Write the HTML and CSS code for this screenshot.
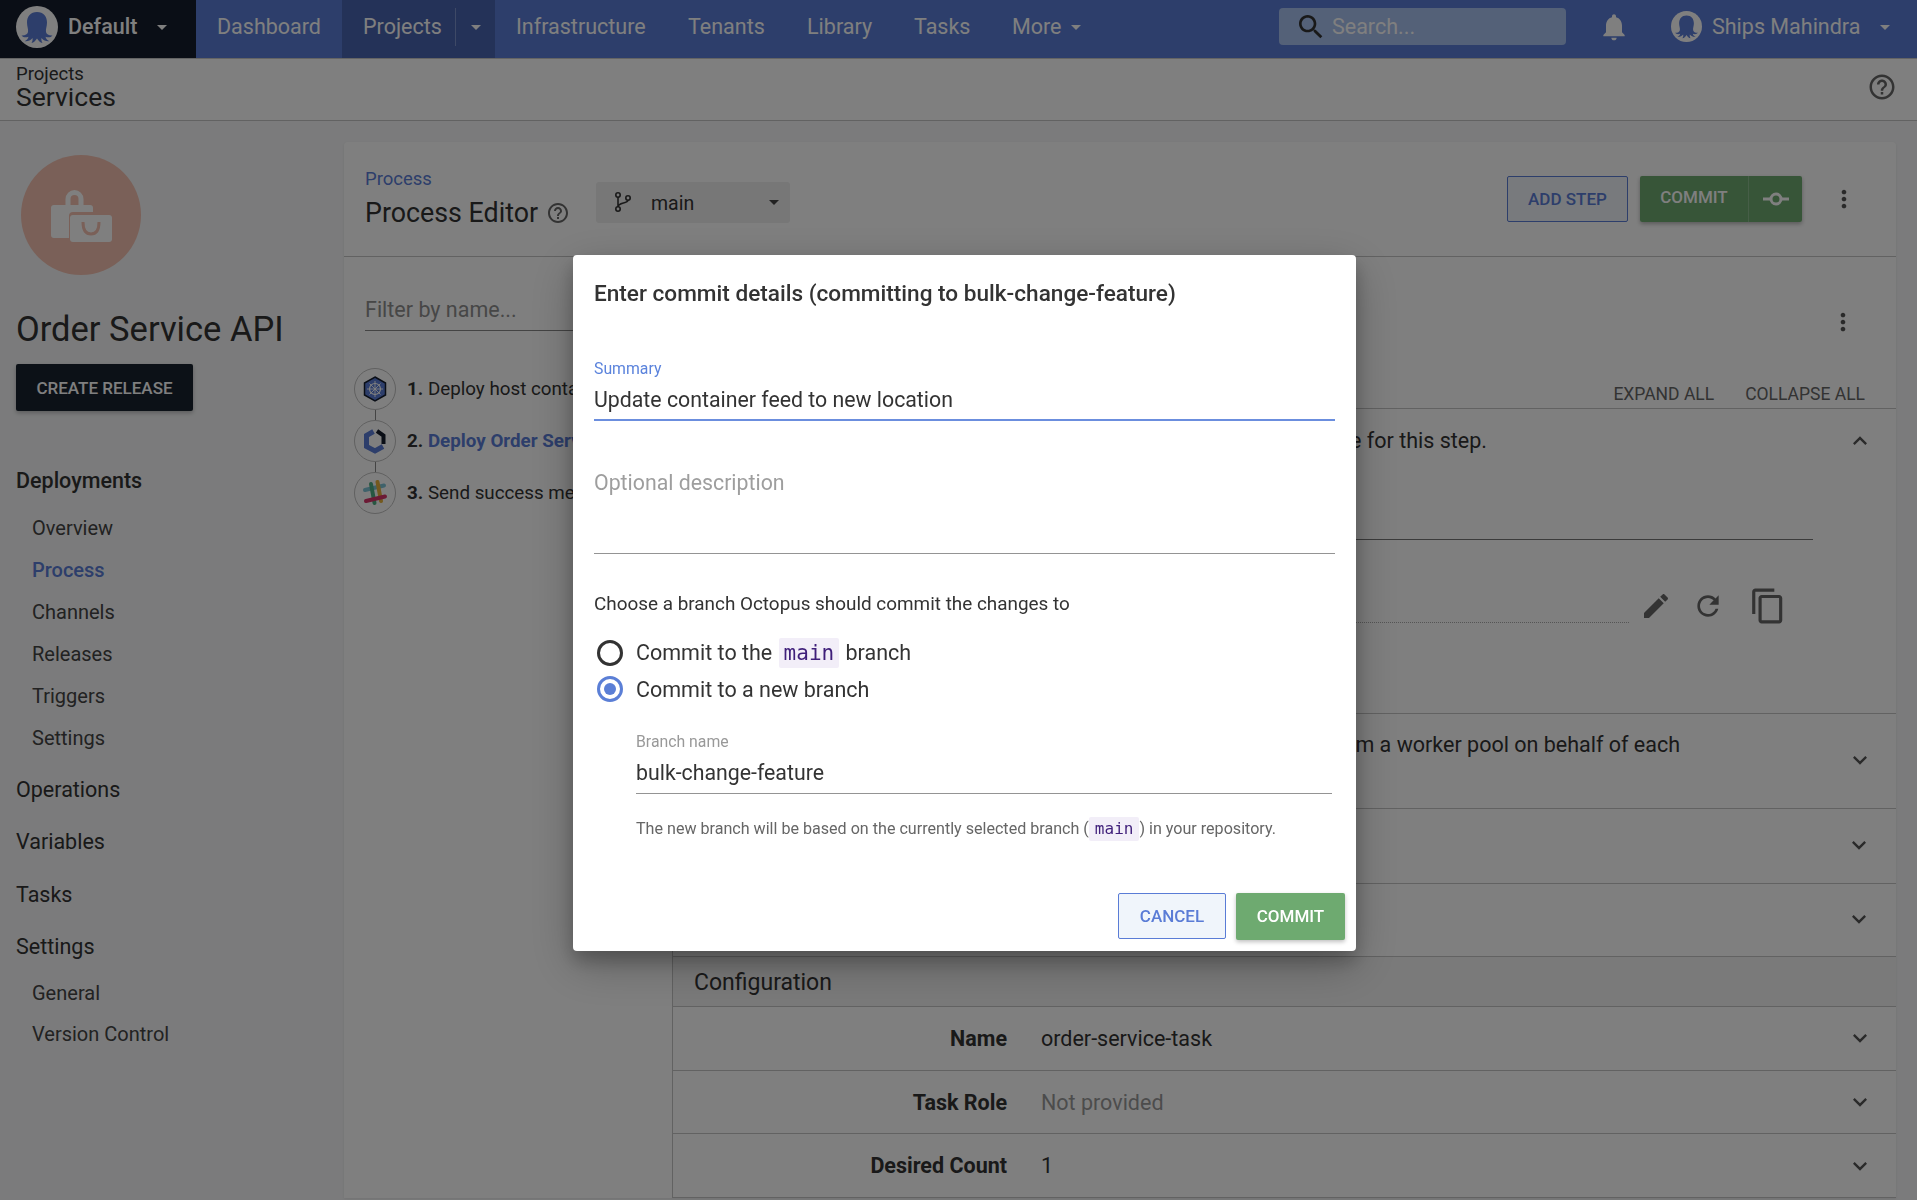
FILE: index.html
```html
<!DOCTYPE html>
<html lang="en">
<head>
    <meta charset="UTF-8">
    <meta name="viewport" content="width=device-width, initial-scale=1.0">
    <title>Process Editor</title>
    <link rel="stylesheet" href="styles.css">
</head>
<body>
    <svg class="sprite" width="0" height="0">
        <symbol id="i-caret" viewBox="0 0 24 24"><path d="M7 10l5 5 5-5z"/></symbol>
        <symbol id="i-down" viewBox="0 0 24 24"><path d="M16.59 8.59L12 13.17 7.41 8.59 6 10l6 6 6-6z"/></symbol>
        <symbol id="i-up" viewBox="0 0 24 24"><path d="M12 8l-6 6 1.41 1.41L12 10.83l4.59 4.58L18 14z"/></symbol>
        <symbol id="i-kebab" viewBox="0 0 24 24"><path d="M12 8c1.1 0 2-.9 2-2s-.9-2-2-2-2 .9-2 2 .9 2 2 2zm0 2c-1.1 0-2 .9-2 2s.9 2 2 2 2-.9 2-2-.9-2-2-2zm0 6c-1.1 0-2 .9-2 2s.9 2 2 2 2-.9 2-2-.9-2-2-2z"/></symbol>
        <symbol id="i-help" viewBox="0 0 24 24"><path d="M11 18h2v-2h-2v2zm1-16C6.48 2 2 6.48 2 12s4.48 10 10 10 10-4.48 10-10S17.52 2 12 2zm0 18c-4.41 0-8-3.59-8-8s3.59-8 8-8 8 3.59 8 8-3.59 8-8 8zm0-14c-2.21 0-4 1.79-4 4h2c0-1.1.9-2 2-2s2 .9 2 2c0 2-3 1.75-3 5h2c0-2.25 3-2.5 3-5 0-2.21-1.79-4-4-4z"/></symbol>
        <symbol id="i-octo" viewBox="0 0 42 42">
            <circle cx="21" cy="21" r="21" fill="#fff"/>
            <path fill="#5a7cd6" d="M21 6c-6.500 0-10 4.500-10 10.500 0 4 1.500 6.500 1 9.500-.4 2.300-3 3.700-6.500 3.500 1.500 2 4.500 2.300 7 1.200-.5 2-2 3.500-4 4.500 3 .5 6-.8 8-3.200.3 1.800 0 3.500-1 5 2.300-.5 4-2.200 5.500-4.500 1.500 2.300 3.200 4 5.500 4.500-1-1.500-1.300-3.200-1-5 2 2.400 5 3.700 8 3.200-2-1-3.500-2.500-4-4.500 2.500 1.100 5.500.8 7-1.200-3.500.2-6.100-1.200-6.500-3.500-.5-3 1-5.500 1-9.500C31 10.500 27.500 6 21 6z"/>
        </symbol>
    </svg>

    <header class="topbar">
        <div class="space-switch">
            <svg class="octo"><use href="#i-octo"/></svg>
            <span class="space-name">Default</span>
            <svg class="caret"><use href="#i-caret"/></svg>
        </div>
        <nav class="mainnav">
            <a class="nav-link nav-dash">Dashboard</a>
            <div class="nav-active">
                <a class="nav-link nav-projects">Projects</a>
                <span class="nav-sep"></span>
                <svg class="caret"><use href="#i-caret"/></svg>
            </div>
            <a class="nav-link nav-infra">Infrastructure</a>
            <a class="nav-link nav-tenants">Tenants</a>
            <a class="nav-link nav-library">Library</a>
            <a class="nav-link nav-tasks">Tasks</a>
            <a class="nav-link nav-more">More <svg class="caret"><use href="#i-caret"/></svg></a>
        </nav>
        <div class="top-right">
            <div class="search">
                <svg class="search-icon" viewBox="0 0 24 24"><path d="M15.5 14h-.79l-.28-.27C15.41 12.590 16 11.110 16 9.500 16 5.910 13.090 3 9.500 3S3 5.910 3 9.500 5.910 16 9.500 16c1.610 0 3.090-.59 4.230-1.570l.27.28v.79l5 4.990L20.490 19l-4.990-5zm-6 0C7.010 14 5 11.990 5 9.500S7.010 5 9.500 5 14 7.010 14 9.500 11.990 14 9.500 14z"/></svg>
                <span>Search...</span>
            </div>
            <svg class="bell" viewBox="0 0 24 24"><path d="M12 22c1.100 0 2-.9 2-2h-4c0 1.100.89 2 2 2zm6-6v-5c0-3.070-1.640-5.640-4.500-6.320V4c0-.83-.67-1.500-1.500-1.500s-1.500.67-1.500 1.500v.68C7.630 5.360 6 7.920 6 11v5l-2 2v1h16v-1l-2-2z"/></svg>
            <svg class="avatar"><use href="#i-octo"/></svg>
            <span class="user-name">Ships Mahindra</span>
            <svg class="caret"><use href="#i-caret"/></svg>
        </div>
    </header>

    <div class="crumbbar">
        <div>
            <div class="crumb">Projects</div>
            <div class="crumb-title">Services</div>
        </div>
        <svg class="crumb-help"><use href="#i-help"/></svg>
    </div>

    <div class="page">
        <aside class="sidebar">
            <div class="project-logo">
                <svg viewBox="0 0 120 120" width="120" height="120">
                    <path d="M47 50v-6a6.500 6.500 0 0 1 13 0v6" fill="none" stroke="#fff" stroke-width="5"/>
                    <path fill="#fff" d="M33 50h36a3 3 0 0 1 3 3v4H52a4 4 0 0 0-4 4v22H33a3 3 0 0 1-3-3V53a3 3 0 0 1 3-3z"/>
                    <path fill="#fff" d="M52 60h36a3 3 0 0 1 3 3v21a3 3 0 0 1-3 3H52a3 3 0 0 1-3-3V63a3 3 0 0 1 3-3z"/>
                    <path d="M62 67c0 9 3 12 8 12s8-3 8-12" fill="none" stroke="#f4c0b0" stroke-width="3"/>
                </svg>
            </div>
            <h2 class="project-name">Order Service API</h2>
            <button class="btn-release">CREATE RELEASE</button>
            <ul class="sidenav">
                <li class="side-main first">Deployments</li>
                <li class="side-sub">Overview</li>
                <li class="side-sub current">Process</li>
                <li class="side-sub">Channels</li>
                <li class="side-sub">Releases</li>
                <li class="side-sub">Triggers</li>
                <li class="side-sub">Settings</li>
                <li class="side-main">Operations</li>
                <li class="side-main">Variables</li>
                <li class="side-main">Tasks</li>
                <li class="side-main group-end">Settings</li>
                <li class="side-sub tight">General</li>
                <li class="side-sub tight">Version Control</li>
            </ul>
        </aside>

        <main class="card">
            <div class="card-head">
                <div class="title-block">
                    <div class="crumb-link">Process</div>
                    <div class="card-title">Process Editor <svg class="title-help"><use href="#i-help"/></svg></div>
                </div>
                <div class="branch-select">
                    <svg class="git-icon" viewBox="0 0 20 24">
                        <circle cx="5" cy="5" r="2.200" fill="none" stroke="#333" stroke-width="1.600"/>
                        <circle cx="5" cy="19" r="2.200" fill="none" stroke="#333" stroke-width="1.600"/>
                        <circle cx="15" cy="8" r="2.200" fill="none" stroke="#333" stroke-width="1.600"/>
                        <path d="M5 7v10M15 10c0 4-10 2-10 7" fill="none" stroke="#333" stroke-width="1.600"/>
                    </svg>
                    <span>main</span>
                    <svg class="caret"><use href="#i-caret"/></svg>
                </div>
                <button class="btn-outline btn-add">ADD STEP</button>
                <div class="commit-group">
                    <button class="btn-green btn-commit">COMMIT</button>
                    <button class="btn-green btn-commit-icon">
                        <svg viewBox="0 0 26 14" width="26" height="14"><path d="M0 7h7M19 7h7" stroke="#fff" stroke-width="3"/><circle cx="13" cy="7" r="5" fill="none" stroke="#fff" stroke-width="3"/></svg>
                    </button>
                </div>
                <svg class="kebab head-kebab"><use href="#i-kebab"/></svg>
            </div>

            <div class="card-body">
                <section class="steps">
                    <div class="filter">Filter by name...</div>
                    <div class="step">
                        <span class="step-icon">
                            <svg viewBox="0 0 26 26" width="26" height="26">
                                <path d="M13 1l10.500 6v12L13 25 2.500 19V7z" fill="#5a7cd6" stroke="#141c2c" stroke-width="1.500"/>
                                <circle cx="13" cy="13" r="5.500" fill="none" stroke="#fff" stroke-width="1.200"/>
                                <path d="M13 5v16M5 13h16M7.500 7.500l11 11M18.500 7.500l-11 11" stroke="#fff" stroke-width=".9"/>
                            </svg>
                        </span>
                        <span class="step-text"><b>1.</b> Deploy host container</span>
                    </div>
                    <div class="step-line"></div>
                    <div class="step">
                        <span class="step-icon">
                            <svg viewBox="0 0 26 26" width="26" height="26" fill="none">
                                <path d="M11.500 3.500L4.500 7.500v11l8.500 4.500 8-4.500" stroke="#5a7cd6" stroke-width="5"/>
                                <path d="M15 3l6.500 4.500V16" stroke="#141c2c" stroke-width="4"/>
                            </svg>
                        </span>
                        <span class="step-text"><b>2.</b> <a class="step-current">Deploy Order Service</a></span>
                    </div>
                    <div class="step-line"></div>
                    <div class="step">
                        <span class="step-icon">
                            <svg viewBox="0 0 26 26" width="26" height="26" fill="none" stroke-width="4" stroke-linecap="round">
                                <path d="M3 10l19-4.500" stroke="#7fc4d6"/>
                                <path d="M9 4l3.500 19" stroke="#4fae84"/>
                                <path d="M15.500 2l3.500 19" stroke="#e8b23c"/>
                                <path d="M4 21l19-4.500" stroke="#d8346a"/>
                            </svg>
                        </span>
                        <span class="step-text"><b>3.</b> Send success message</span>
                    </div>
                </section>

                <section class="details">
                    <div class="details-top"><svg class="kebab"><use href="#i-kebab"/></svg></div>
                    <div class="expand-bar">
                        <a>EXPAND ALL</a>
                        <a>COLLAPSE ALL</a>
                    </div>
                    <div class="panel panel-open">
                        <div class="panel-row">
                            <p class="panel-sum sum-one">Provide the deployment image for this step.</p>
                            <svg class="chev chev-open"><use href="#i-up"/></svg>
                        </div>
                        <div class="panel-input"></div>
                        <div class="panel-tools">
                            <div class="panel-dotted"></div>
                            <svg class="tool tool-pen" viewBox="0 0 24 24"><path d="M3 17.250V21h3.750L17.810 9.940l-3.750-3.750L3 17.250zM20.710 7.040c.39-.39.39-1.020 0-1.410l-2.340-2.340c-.39-.39-1.020-.39-1.410 0l-1.830 1.830 3.750 3.750 1.830-1.830z"/></svg>
                            <svg class="tool tool-redo" viewBox="0 0 24 24"><path d="M17.650 6.350C16.200 4.900 14.210 4 12 4c-4.420 0-7.990 3.580-7.990 8s3.570 8 7.990 8c3.730 0 6.840-2.550 7.730-6h-2.080c-.82 2.330-3.040 4-5.650 4-3.310 0-6-2.690-6-6s2.690-6 6-6c1.660 0 3.140.69 4.220 1.780L13 11h7V4l-2.350 2.350z"/></svg>
                            <svg class="tool tool-copy" viewBox="0 0 24 24"><path d="M16 1H4c-1.100 0-2 .9-2 2v14h2V3h12V1zm3 4H8c-1.100 0-2 .9-2 2v14c0 1.100.9 2 2 2h11c1.100 0 2-.9 2-2V7c0-1.100-.9-2-2-2zm0 16H8V7h11v14z"/></svg>
                        </div>
                    </div>
                    <div class="panel panel-two">
                        <p class="panel-sum sum-two">Run from a worker pool on behalf of each</p>
                        <svg class="chev"><use href="#i-down"/></svg>
                    </div>
                    <div class="panel panel-three"><svg class="chev"><use href="#i-down"/></svg></div>
                    <div class="panel panel-four"><svg class="chev"><use href="#i-down"/></svg></div>
                    <div class="section-head">Configuration</div>
                    <div class="field-row">
                        <span class="field-label">Name</span>
                        <span class="field-value">order-service-task</span>
                        <svg class="chev"><use href="#i-down"/></svg>
                    </div>
                    <div class="field-row">
                        <span class="field-label">Task Role</span>
                        <span class="field-value muted">Not provided</span>
                        <svg class="chev"><use href="#i-down"/></svg>
                    </div>
                    <div class="field-row">
                        <span class="field-label">Desired Count</span>
                        <span class="field-value">1</span>
                        <svg class="chev"><use href="#i-down"/></svg>
                    </div>
                </section>
            </div>
        </main>
    </div>

    <!-- Commit dialog -->
    <div class="scrim">
        <div class="dialog">
            <h3 class="dialog-title">Enter commit details (committing to bulk-change-feature)</h3>
            <div class="field-summary">
                <label class="float-label active">Summary</label>
                <div class="field-text">Update container feed to new location</div>
            </div>
            <div class="field-desc">Optional description</div>
            <p class="choose">Choose a branch Octopus should commit the changes to</p>
            <div class="radio-row">
                <span class="radio"></span>
                <span>Commit to the <code class="code-big">main</code> branch</span>
            </div>
            <div class="radio-row">
                <span class="radio checked"></span>
                <span>Commit to a new branch</span>
            </div>
            <div class="branch-field">
                <label class="float-label">Branch name</label>
                <div class="field-text">bulk-change-feature</div>
            </div>
            <p class="hint">The new branch will be based on the currently selected branch (<code class="code-small">main</code>) in your repository.</p>
            <div class="dialog-actions">
                <button class="btn-outline btn-cancel">CANCEL</button>
                <button class="btn-green btn-ok">COMMIT</button>
            </div>
        </div>
    </div>
</body>
</html>
```

FILE: styles.css
```css
* {
    box-sizing: border-box;
}

html, body {
    height: 1200px;
    overflow: hidden;
}

body {
    margin: 0;
    font-family: Roboto, "Liberation Sans", sans-serif;
    background-color: #f6f7f8;
    color: #333;
}

.sprite {
    display: block;
    height: 0;
}

button {
    font-family: inherit;
    cursor: pointer;
}

.caret {
    width: 24px;
    height: 24px;
    fill: #fff;
    flex: none;
}

/* Top navigation */
.topbar {
    display: flex;
    height: 59px;
    background-color: #5a7cd6;
    border-bottom: 1px solid #c8c8c8;
    color: #fff;
}

.space-switch {
    display: flex;
    align-items: center;
    width: 196px;
    height: 58px;
    padding: 0 0 5px 16px;
    background-color: #141c2c;
}

.octo {
    width: 42px;
    height: 42px;
}

.space-name {
    margin-left: 10px;
    font-size: 21.500px;
    font-weight: 500;
}

.space-switch .caret {
    margin-left: 13px;
}

.mainnav {
    display: flex;
    height: 58px;
    width: 1083px;
    font-size: 21.500px;
}

.nav-link {
    display: flex;
    align-items: center;
    height: 53px;
}

.nav-dash {
    margin-left: 21px;
    width: 125px;
}

.nav-active {
    display: flex;
    align-items: center;
    width: 153px;
    height: 58px;
    padding-bottom: 5px;
    background-color: #4864b0;
}

.nav-projects {
    margin-left: 21px;
    width: 92px;
}

.nav-sep {
    width: 1px;
    height: 38px;
    background-color: #7d93cc;
}

.nav-active .caret {
    margin-left: 8px;
}

.nav-infra { margin-left: 21px; width: 172px; }
.nav-tenants { width: 119px; }
.nav-library { width: 107px; }
.nav-tasks { width: 98px; }

.nav-more .caret {
    margin-left: 2px;
}

.top-right {
    display: flex;
    align-items: center;
    height: 53px;
}

.search {
    display: flex;
    align-items: center;
    width: 287px;
    height: 37px;
    padding-left: 16px;
    border-radius: 4px;
    background-color: #a8c2f0;
    font-size: 21.500px;
    color: #fff;
}

.search-icon {
    width: 32px;
    height: 32px;
    margin-right: 5px;
    fill: #333;
}

.bell {
    width: 32px;
    height: 32px;
    margin-left: 32px;
    fill: #fff;
}

.avatar {
    width: 31px;
    height: 31px;
    margin-left: 41px;
}

.user-name {
    margin-left: 10px;
    font-size: 21.500px;
    width: 161px;
}

/* Breadcrumb row */
.crumbbar {
    display: flex;
    justify-content: space-between;
    align-items: flex-start;
    height: 62px;
    padding: 0 20px 0 16px;
    background-color: #fff;
    border-bottom: 1px solid #c4c4c4;
}

.crumb {
    font-size: 18.500px;
    line-height: 20px;
    margin-top: 5px;
}

.crumb-title {
    font-size: 26.500px;
    line-height: 26px;
}

.crumb-help {
    width: 30px;
    height: 30px;
    margin-top: 13px;
    fill: #666;
}

/* Page columns */
.page {
    display: flex;
    align-items: flex-start;
    padding-top: 21px;
}

.sidebar {
    width: 344px;
    flex: none;
    padding-left: 16px;
}

.project-logo {
    width: 120px;
    height: 120px;
    margin: 13px 0 0 5px;
    border-radius: 50%;
    background-color: #f4c0b0;
}

.project-logo svg {
    display: block;
}

.project-name {
    margin: 32px 0 0;
    font-size: 34.500px;
    line-height: 44px;
    font-weight: 400;
}

.btn-release {
    display: block;
    width: 177px;
    height: 47px;
    margin-top: 13px;
    border: none;
    border-radius: 2px;
    background-color: #18222e;
    color: #fff;
    font-size: 17px;
    font-weight: 500;
    box-shadow: 0 2px 4px rgba(0, 0, 0, 0.25);
}

.sidenav {
    list-style: none;
    margin: 0;
    padding: 0;
}

.side-main {
    font-size: 21.500px;
    height: 52.300px;
    line-height: 52px;
}

.side-main.first {
    margin-top: 44px;
    height: 52px;
    font-weight: 500;
}

.side-main.group-end {
    height: 52px;
}

.side-sub {
    font-size: 20px;
    height: 42px;
    line-height: 42px;
    padding-left: 16px;
    color: #444;
}

.side-sub.tight {
    height: 41px;
    line-height: 41px;
}

.side-sub.current {
    color: #5a7cd6;
    font-weight: 500;
}

.side-sub + .side-main {
    margin-top: 5px;
}

/* Main card */
.card {
    width: 1552px;
    flex: none;
    background-color: #fff;
    border-radius: 4px 4px 0 0;
    box-shadow: 0 1px 3px rgba(0, 0, 0, 0.08);
}

.card-head {
    display: flex;
    align-items: center;
    height: 115px;
    padding-left: 21px;
    border-bottom: 1px solid #c4c4c4;
}

.title-block {
    width: 231px;
}

.crumb-link {
    font-size: 18.500px;
    line-height: 22px;
    color: #5a7cd6;
}

.card-title {
    display: flex;
    align-items: center;
    font-size: 26.800px;
    line-height: 34px;
    margin-top: 6px;
}

.title-help {
    width: 24px;
    height: 24px;
    margin-left: 8px;
    fill: #666;
}

.branch-select {
    display: flex;
    align-items: center;
    width: 194px;
    height: 41px;
    margin-top: 6px;
    padding-left: 17px;
    border-radius: 3px;
    background-color: #eeeeee;
    font-size: 19.500px;
}

.git-icon {
    width: 20px;
    height: 24px;
    margin-right: 18px;
}

.branch-select span {
    width: 111px;
    padding-top: 2px;
}

.branch-select .caret {
    fill: #444;
}

.btn-outline {
    border: 1px solid #5a7cd6;
    border-radius: 2px;
    background-color: #f0f5fb;
    color: #5a7cd6;
    font-size: 17px;
    font-weight: 500;
}

.btn-green {
    border: none;
    background-color: #6eaa70;
    color: #fff;
    font-size: 17px;
    font-weight: 500;
}

.btn-add {
    width: 121px;
    height: 46px;
    margin-left: 717px;
    margin-top: -1px;
}

.commit-group {
    display: flex;
    margin-left: 12px;
    margin-top: -1px;
    box-shadow: 0 2px 4px rgba(0, 0, 0, 0.3);
    border-radius: 2px;
}

.btn-commit {
    width: 109px;
    height: 46px;
    padding-bottom: 4px;
    border-radius: 2px 0 0 2px;
    border-right: 1px solid #8dbd8e;
}

.btn-commit-icon {
    width: 53px;
    height: 46px;
    padding: 3px 0 0;
    border-radius: 0 2px 2px 0;
}

.kebab {
    width: 28px;
    height: 28px;
    fill: #555;
    flex: none;
}

.head-kebab {
    margin-left: 28px;
    margin-top: -1px;
}

.card-body {
    display: flex;
}

/* Step list */
.steps {
    width: 328px;
    flex: none;
    padding: 33px 0 0 21px;
}

.filter {
    height: 41px;
    line-height: 40px;
    margin-bottom: 37px;
    border-bottom: 1px solid #888;
    font-size: 21.500px;
    color: #8e8e8e;
}

.step {
    display: flex;
    align-items: center;
    height: 42px;
    margin-left: -11px;
    white-space: nowrap;
    font-size: 18.800px;
}

.step-icon {
    display: flex;
    align-items: center;
    justify-content: center;
    width: 42px;
    height: 42px;
    flex: none;
    border: 1px solid #c0c0c0;
    border-radius: 50%;
    margin-right: 11px;
    background-color: #fff;
}

.step-text b {
    font-weight: 700;
}

.step-current {
    color: #5a7cd6;
    font-weight: 700;
}

.step-line {
    width: 1px;
    height: 10px;
    margin-left: 10px;
    background-color: #888;
}

/* Details pane */
.details {
    flex: 1;
    border-left: 1px solid #c4c4c4;
}

.details-top {
    display: flex;
    justify-content: flex-end;
    height: 103px;
    padding: 51px 39px 0 0;
}

.expand-bar {
    display: flex;
    justify-content: flex-end;
    gap: 31px;
    height: 49px;
    padding: 24px 31px 0 0;
    border-bottom: 1px solid #c4c4c4;
    font-size: 17.500px;
    line-height: 20px;
    color: #666;
}

.panel {
    border-bottom: 1px solid #c4c4c4;
}

.panel-open {
    height: 305px;
}

.panel-row {
    display: flex;
    align-items: center;
    height: 63px;
}

.panel-sum {
    margin: 0;
    font-size: 21.500px;
    white-space: nowrap;
    text-align: right;
}

.sum-one {
    width: 814px;
}

.sum-two {
    width: 1007px;
}

.chev {
    width: 28px;
    height: 28px;
    fill: #555;
    flex: none;
}

.chev-open {
    margin-left: 359px;
}

.panel-input {
    height: 1px;
    margin: 67px 83px 0 0;
    background-color: #777;
}

.panel-tools {
    display: flex;
    align-items: center;
    height: 58px;
    margin-top: 41px;
    padding-bottom: 8px;
}

.panel-dotted {
    width: 956px;
    height: 34px;
    margin-right: 11px;
    border-bottom: 1px dotted #aaa;
}

.tool {
    fill: #666;
    flex: none;
}

.tool-pen { width: 32px; height: 32px; }
.tool-redo { width: 32px; height: 32px; margin-left: 20px; }
.tool-copy { width: 38px; height: 38px; margin-left: 25px; }

.panel-two {
    display: flex;
    align-items: flex-start;
    height: 95px;
    padding-top: 18px;
}

.panel-two .chev {
    margin: 14px 0 0 166px;
}

.panel-three,
.panel-four {
    display: flex;
    justify-content: flex-end;
    align-items: center;
    padding: 0 23px 2px 0;
}

.panel-three { height: 75px; }
.panel-four { height: 73px; }

.section-head {
    height: 50px;
    padding-left: 21px;
    line-height: 52px;
    border-bottom: 1px solid #c4c4c4;
    background-color: #f4f4f4;
    font-size: 23px;
}

.field-row {
    display: flex;
    align-items: center;
    height: 63.700px;
    border-bottom: 1px solid #c4c4c4;
    font-size: 21.500px;
}

.field-label {
    width: 334px;
    font-weight: 700;
    text-align: right;
}

.field-value {
    width: 795px;
    margin-left: 34px;
}

.field-value.muted {
    color: #999;
}

.field-row .chev {
    margin-left: 10px;
}

/* Dialog over the page */
.scrim {
    position: fixed;
    top: 0;
    left: 0;
    width: 1917px;
    height: 1200px;
    padding: 255px 0 0 573px;
    background-color: rgba(0, 0, 0, 0.5);
}

.dialog {
    width: 783px;
    height: 696px;
    padding: 25px 21px 0;
    border-radius: 4px;
    background-color: #fff;
    box-shadow: 0 14px 45px rgba(0, 0, 0, 0.25), 0 10px 18px rgba(0, 0, 0, 0.22);
}

.dialog-title {
    margin: 0;
    font-size: 22.600px;
    line-height: 28px;
    font-weight: 500;
}

.field-summary {
    height: 62px;
    margin-top: 51px;
    border-bottom: 2px solid #6b8ede;
}

.float-label {
    display: block;
    font-size: 15.800px;
    line-height: 20px;
    color: #999;
}

.float-label.active {
    color: #5b83dc;
}

.field-text {
    font-size: 21.300px;
    line-height: 26px;
    margin-top: 8px;
}

.field-desc {
    height: 112px;
    margin-top: 21px;
    padding-top: 28px;
    border-bottom: 1px solid #949494;
    line-height: 26px;
    font-size: 21.300px;
    color: #9e9e9e;
}

.choose {
    margin: 39px 0 0;
    font-size: 18.900px;
    line-height: 22px;
}

.radio-row {
    display: flex;
    align-items: center;
    height: 36px;
    margin-left: 3px;
    font-size: 21.500px;
}

.choose + .radio-row {
    margin-top: 20px;
}

.radio {
    width: 26px;
    height: 26px;
    flex: none;
    margin-right: 13px;
    border: 3px solid #333;
    border-radius: 50%;
}

.radio.checked {
    position: relative;
    border-color: #5b7fd6;
}

.radio.checked::after {
    content: "";
    position: absolute;
    top: 4px;
    left: 4px;
    width: 12px;
    height: 12px;
    border-radius: 50%;
    background-color: #5b7fd6;
}

code {
    font-family: "DejaVu Sans Mono", "Liberation Mono", monospace;
    background-color: #f2eef8;
    color: #3f1f7a;
    border-radius: 2px;
}

.code-big {
    display: inline-block;
    padding: 0 5px;
    margin: 0 1px;
    font-size: 21px;
    line-height: 30px;
}

.code-small {
    display: inline-block;
    padding: 0 6px;
    font-size: 16px;
    line-height: 24px;
}

.branch-field {
    width: 696px;
    height: 62px;
    margin: 25px 0 0 42px;
    border-bottom: 1px solid #949494;
}

.hint {
    margin: 23px 0 0 42px;
    font-size: 16.100px;
    line-height: 24px;
    color: #666;
    white-space: nowrap;
}

.dialog-actions {
    display: flex;
    justify-content: flex-end;
    gap: 10px;
    margin: 52px -10px 0 0;
}

.btn-cancel {
    width: 108px;
    height: 46px;
}

.btn-ok {
    width: 109px;
    height: 47px;
    padding-bottom: 3px;
    border-radius: 2px;
    box-shadow: 0 2px 4px rgba(0, 0, 0, 0.25);
}
```
